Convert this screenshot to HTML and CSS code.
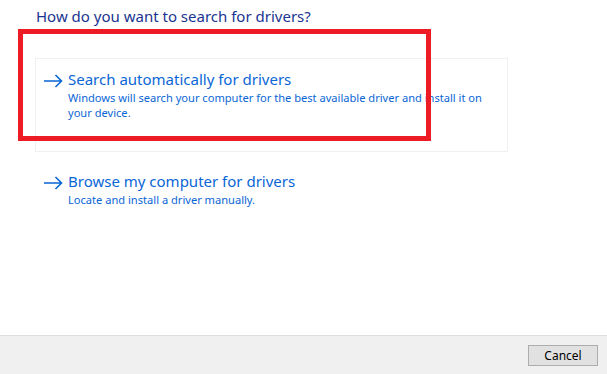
FILE: index.html
```html
<!DOCTYPE html>
<html>
<head>
<meta charset="utf-8">
<link rel="stylesheet" href="styles.css">
</head>
<body>
<div class="dialog">
  <main class="content">
    <h1 class="heading">How do you want to search for drivers?</h1>
    <div class="options">
      <div class="option option-hover">
        <svg class="arrow" width="20" height="14" viewBox="0 0 20 14"><path d="M1 7H18.5M12.5 1L18.5 7L12.5 13" fill="none" stroke="#0a66d6" stroke-width="1.6"/></svg>
        <div class="option-text">
          <div class="option-title">Search automatically for drivers</div>
          <div class="option-desc">Windows will search your computer for the best available driver and install it on your device.</div>
        </div>
      </div>
      <div class="option">
        <svg class="arrow" width="20" height="14" viewBox="0 0 20 14"><path d="M1 7H18.5M12.5 1L18.5 7L12.5 13" fill="none" stroke="#0a66d6" stroke-width="1.6"/></svg>
        <div class="option-text">
          <div class="option-title">Browse my computer for drivers</div>
          <div class="option-desc">Locate and install a driver manually.</div>
        </div>
      </div>
    </div>
    <div class="highlight"></div>
  </main>
  <footer class="footer">
    <button class="btn">Cancel</button>
  </footer>
</div>
</body>
</html>
```

FILE: styles.css
```css
html, body {
  margin: 0;
  padding: 0;
  background: #ffffff;
}
.dialog {
  width: 607px;
  height: 374px;
  display: flex;
  flex-direction: column;
  font-family: "Noto Sans", "Open Sans", sans-serif;
}
.content {
  position: relative;
  flex: 1;
  padding: 0 0 0 35px;
}
.heading {
  margin: 0;
  padding: 5px 0 0 1px;
  font-size: 15px;
  font-weight: 400;
  line-height: 22px;
  color: #1a3490;
}
.options {
  margin-top: 31px;
  width: 473px;
  display: flex;
  flex-direction: column;
  gap: 8px;
}
.option {
  display: flex;
  align-items: flex-start;
  gap: 5px;
  padding: 9px 8px 0 7px;
  border: 1px solid transparent;
  box-sizing: border-box;
  min-height: 94px;
}
.option-hover {
  border-color: #f0f0f0;
}
.arrow {
  flex: none;
  margin-top: 6px;
}
.option-text {
  color: #0a66d6;
}
.option-title {
  font-size: 15px;
  line-height: 22px;
}
.option-desc {
  font-size: 11.1px;
  line-height: 15px;
  width: 430px;
}
.highlight {
  position: absolute;
  left: 18px;
  top: 29px;
  width: 413px;
  height: 112px;
  box-sizing: border-box;
  border: 5px solid #ed1c24;
}
.footer {
  flex: none;
  height: 29px;
  border-top: 1px solid #dfdfdf;
  background: #f0f0f0;
  display: flex;
  justify-content: flex-end;
  align-items: flex-start;
  padding: 9px 9px 0 0;
}
.btn {
  width: 70px;
  height: 21px;
  box-sizing: border-box;
  border: 1px solid #adadad;
  background: #e1e1e1;
  font-family: "Noto Sans", sans-serif;
  font-size: 12px;
  color: #000;
  padding: 0;
  line-height: 18px;
}
```
